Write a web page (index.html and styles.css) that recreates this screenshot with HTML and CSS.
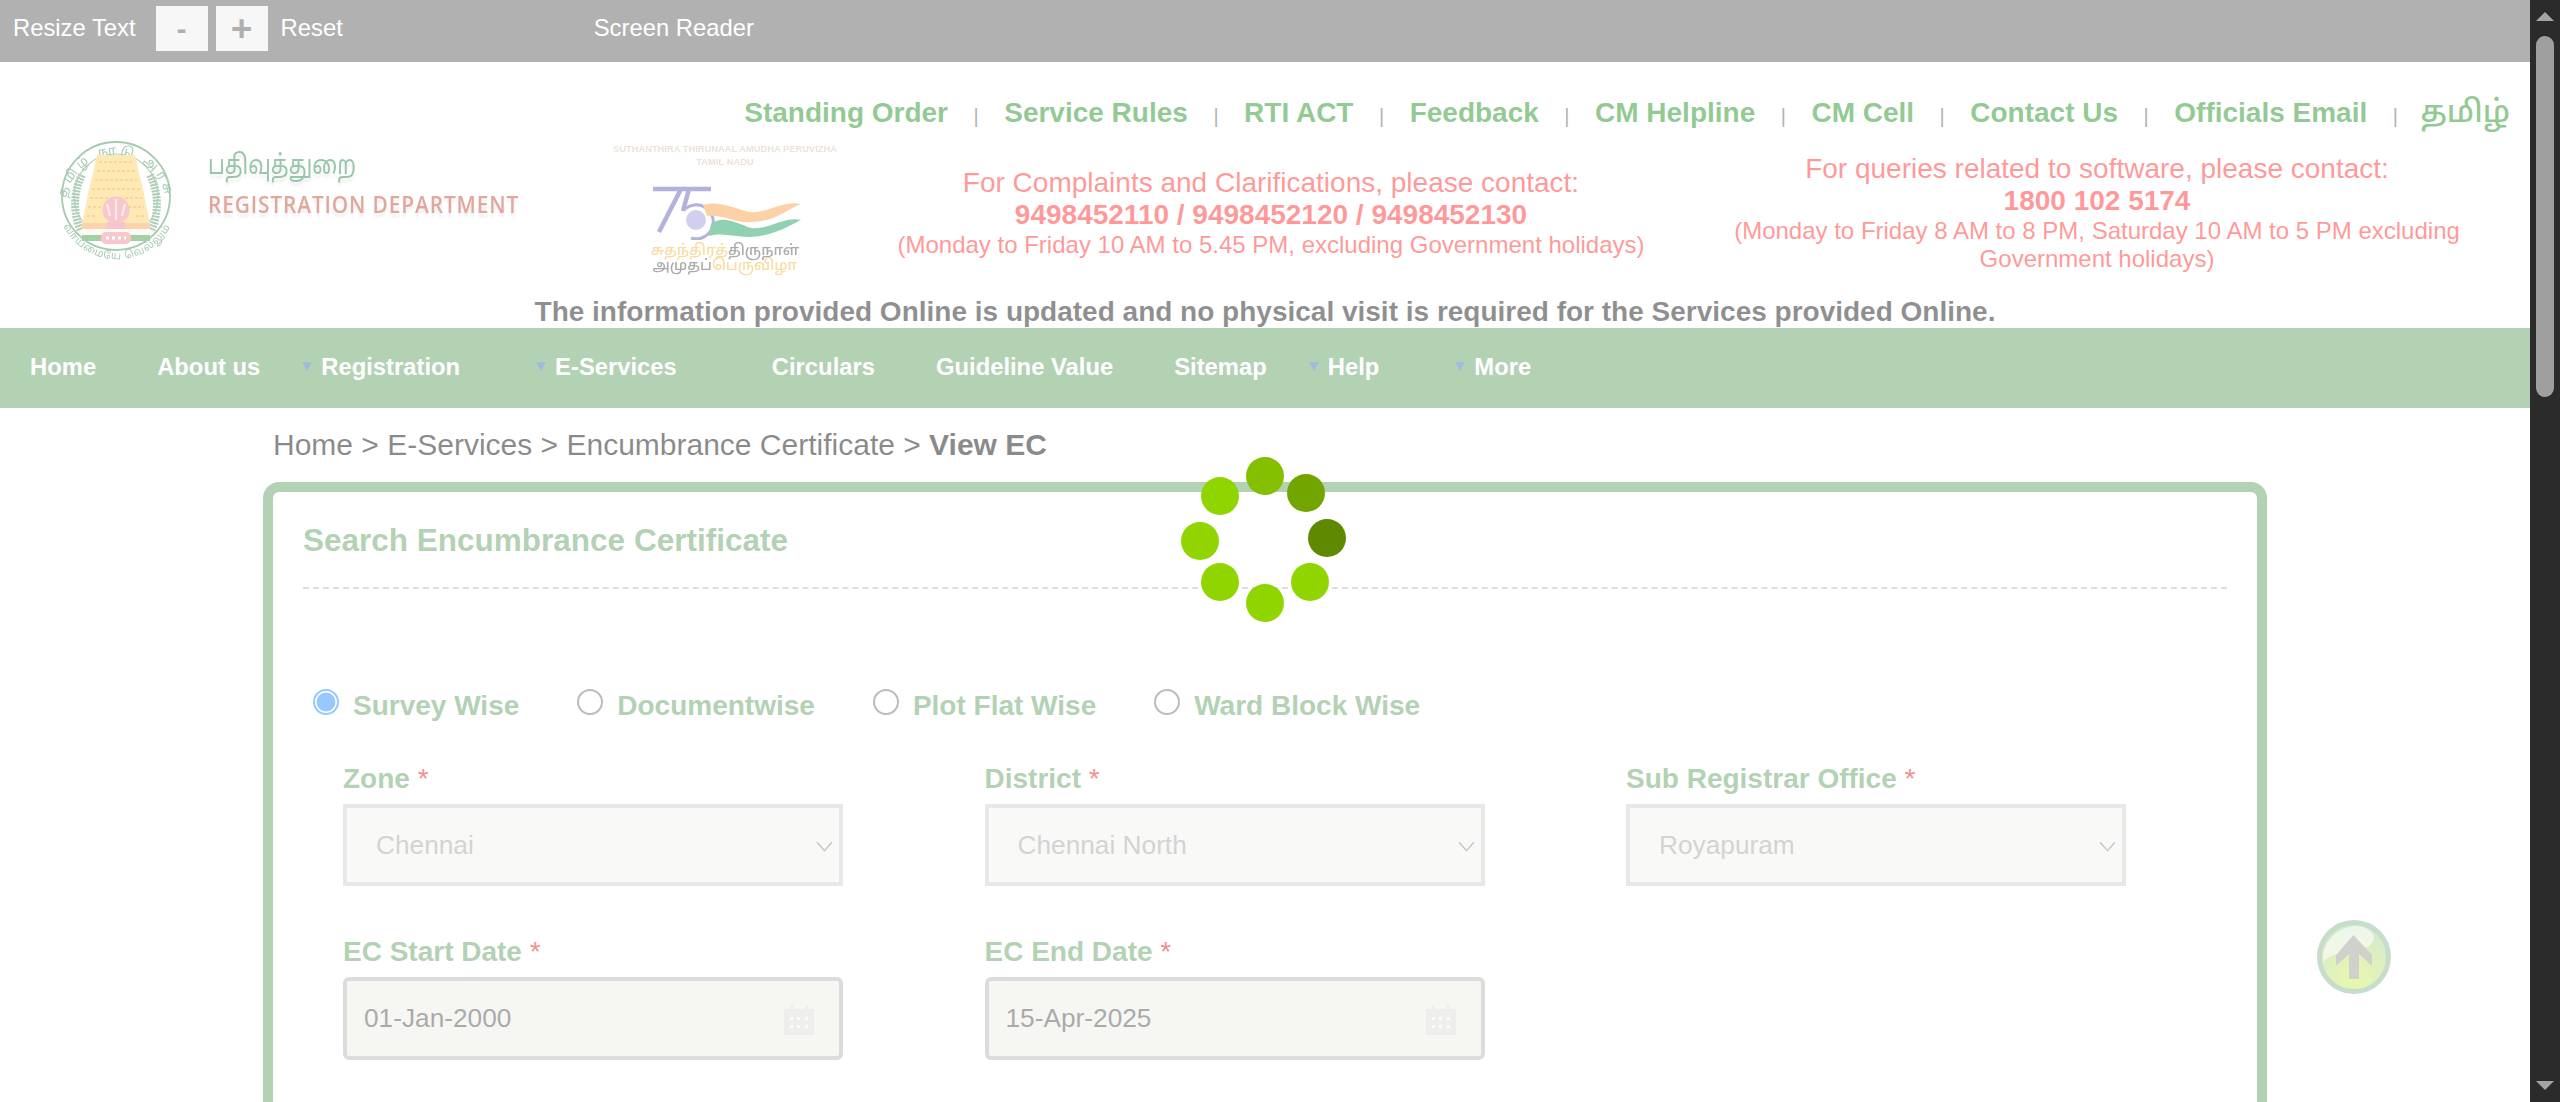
FILE: index.html
```html
<!DOCTYPE html>
<html lang="en">
<head>
<meta charset="utf-8">
<title>View EC - Registration Department</title>
<link rel="stylesheet" href="styles.css">
</head>
<body>
<div class="app">
  <div class="page">
    <div class="topbar">
      <span class="resize-label">Resize Text</span>
      <button class="size-btn minus">-</button>
      <button class="size-btn plus">+</button>
      <span class="reset">Reset</span>
      <span class="reader">Screen Reader</span>
    </div>

    <header class="header">
      <nav class="links">
        <a>Standing Order</a><i>|</i>
        <a>Service Rules</a><i>|</i>
        <a>RTI ACT</a><i>|</i>
        <a>Feedback</a><i>|</i>
        <a>CM Helpline</a><i>|</i>
        <a>CM Cell</a><i>|</i>
        <a>Contact Us</a><i>|</i>
        <a>Officials Email</a><i>|</i>
        <a class="tamil">தமிழ்</a>
      </nav>
      <div class="hdr-row">
        <div class="brand">
          <svg class="emblem" viewBox="0 0 122 128">
            <defs>
              <path id="ring-top" d="M10 66 A 49 49 0 1 1 110 66"/>
              <path id="ring-bottom" d="M6 84 A 60 60 0 0 0 116 84"/>
            </defs>
            <circle cx="60" cy="57" r="54" fill="#fff" stroke="#4c9360" stroke-width="1.8"/>
            <circle cx="60" cy="57" r="42" fill="#fff" stroke="#6ba77a" stroke-width="1.2"/>
            <text class="ring-text"><textPath href="#ring-top" startOffset="50%" text-anchor="middle">தமிழ் நாடு அரசு</textPath></text>
            <path d="M26 36 C16 55 18 78 25 92 M94 36 C104 55 102 78 95 92" fill="none" stroke="#5f9f70" stroke-width="8" stroke-dasharray="2 1.2"/>
            <path d="M41 16 L79 16 L83 34 L87 50 L90 66 L94 84 L26 84 L30 66 L33 50 L37 34 Z" fill="#fcd067"/>
            <path d="M43 23 H77 M41 32 H79 M39 41 H81 M36 50 H84 M34 59 H86 M32 68 H88 M31 77 H40 M80 77 H90" stroke="#f2ab2e" stroke-width="2.2" stroke-dasharray="3 2"/>
            <rect x="26" y="84" width="68" height="6" fill="#f7a85c"/>
            <rect x="26" y="90" width="68" height="6" fill="#fdf7ee"/>
            <rect x="26" y="96" width="68" height="6" fill="#4aa04a"/>
            <circle cx="60" cy="71" r="13.5" fill="#f18f9c"/>
            <path d="M51 65 L54 77 M60 60 V81 M69 65 L66 77" stroke="#fbd3d8" stroke-width="2.2"/>
            <rect x="51" y="83" width="18" height="7" fill="#ee8996"/>
            <rect x="45" y="93" width="30" height="12" rx="5" fill="#f08f9c"/>
            <path d="M50 99 H70" stroke="#fff" stroke-width="3" stroke-dasharray="3 3"/>
            <text class="ring-motto"><textPath href="#ring-bottom" startOffset="50%" text-anchor="middle">வாய்மையே வெல்லும்</textPath></text>
          </svg>
          <div class="dept">
            <div class="dept-ta">பதிவுத்துறை</div>
            <div class="dept-en">REGISTRATION DEPARTMENT</div>
          </div>
        </div>
        <div class="azadi">
          <div class="azadi-cap">SUTHANTHIRA THIRUNAAL AMUDHA PERUVIZHA<br>TAMIL NADU</div>
          <svg class="azadi-mark" viewBox="0 0 152 54">
            <path d="M2 3 H30 L8 46" fill="none" stroke="#6665b8" stroke-width="4.5"/>
            <path d="M31 3 H60 M38 3 L32 25" fill="none" stroke="#6665b8" stroke-width="4.5"/>
            <path d="M33 24 A 17 17 0 1 1 40 52" fill="none" stroke="#6665b8" stroke-width="3"/>
            <circle cx="45" cy="34" r="10" fill="#a09edd"/>
            <path d="M52 19 C66 14 84 22 98 26 C116 28 132 14 150 18 C138 22 124 36 100 36 C86 38 72 28 56 30 Z" fill="#f6a34a"/>
            <path d="M60 38 C72 28 88 38 100 42 C118 44 134 30 150 34 C138 40 122 50 100 51 C86 52 74 46 58 50 Z" fill="#1fa261"/>
          </svg>
          <div class="azadi-ta"><b class="gold">சுதந்திரத்</b><b class="slate">திருநாள்</b><br><b class="slate">அமுதப்</b><b class="gold">பெருவிழா</b></div>
        </div>
        <div class="contact one">
          <p>For Complaints and Clarifications, please contact:</p>
          <strong>9498452110 / 9498452120 / 9498452130</strong>
          <small>(Monday to Friday 10 AM to 5.45 PM, excluding Government holidays)</small>
        </div>
        <div class="contact two">
          <p>For queries related to software, please contact:</p>
          <strong>1800 102 5174</strong>
          <small>(Monday to Friday 8 AM to 8 PM, Saturday 10 AM to 5 PM excluding Government holidays)</small>
        </div>
      </div>
      <p class="notice">The information provided Online is updated and no physical visit is required for the Services provided Online.</p>
    </header>

    <nav class="menu">
      <a>Home</a>
      <a>About us</a>
      <a class="drop">Registration</a>
      <a class="drop">E-Services</a>
      <a>Circulars</a>
      <a>Guideline Value</a>
      <a>Sitemap</a>
      <a class="drop">Help</a>
      <a class="drop">More</a>
    </nav>

    <main class="content">
      <div class="crumbs">Home &gt; E-Services &gt; Encumbrance Certificate &gt; <b>View EC</b></div>
      <section class="card">
        <h2>Search Encumbrance Certificate</h2>
        <div class="radios">
          <label><input type="radio" name="mode" checked>Survey Wise</label>
          <label><input type="radio" name="mode">Documentwise</label>
          <label><input type="radio" name="mode">Plot Flat Wise</label>
          <label><input type="radio" name="mode">Ward Block Wise</label>
        </div>
        <div class="form-grid">
          <div class="field">
            <label>Zone <em>*</em></label>
            <div class="sel-wrap">
              <select disabled><option>Chennai</option></select>
              <svg class="chev" viewBox="0 0 16 10"><path d="M1 1 L8 9 L15 1" fill="none" stroke="currentColor" stroke-width="1.2"/></svg>
            </div>
          </div>
          <div class="field">
            <label>District <em>*</em></label>
            <div class="sel-wrap">
              <select disabled><option>Chennai North</option></select>
              <svg class="chev" viewBox="0 0 16 10"><path d="M1 1 L8 9 L15 1" fill="none" stroke="currentColor" stroke-width="1.2"/></svg>
            </div>
          </div>
          <div class="field">
            <label>Sub Registrar Office <em>*</em></label>
            <div class="sel-wrap">
              <select disabled><option>Royapuram</option></select>
              <svg class="chev" viewBox="0 0 16 10"><path d="M1 1 L8 9 L15 1" fill="none" stroke="currentColor" stroke-width="1.2"/></svg>
            </div>
          </div>
          <div class="field">
            <label>EC Start Date <em>*</em></label>
            <div class="date-wrap">
              <input type="text" value="01-Jan-2000" readonly>
              <svg class="cal" viewBox="0 0 32 32"><path d="M7 2h3v4h12V2h3v4h6v25a1 1 0 0 1-1 1H2a1 1 0 0 1-1-1V6h6z" fill="currentColor"/><path d="M7 14h3v3H7zM14 14h3v3h-3zM22 14h3v3h-3zM7 22h3v3H7zM14 22h3v3h-3zM22 22h3v3h-3z" fill="#f7f7f2"/></svg>
            </div>
          </div>
          <div class="field">
            <label>EC End Date <em>*</em></label>
            <div class="date-wrap">
              <input type="text" value="15-Apr-2025" readonly>
              <svg class="cal" viewBox="0 0 32 32"><path d="M7 2h3v4h12V2h3v4h6v25a1 1 0 0 1-1 1H2a1 1 0 0 1-1-1V6h6z" fill="currentColor"/><path d="M7 14h3v3H7zM14 14h3v3h-3zM22 14h3v3h-3zM7 22h3v3H7zM14 22h3v3h-3zM22 22h3v3h-3z" fill="#f7f7f2"/></svg>
            </div>
          </div>
        </div>
      </section>
    </main>

    <svg class="to-top" viewBox="0 0 74 74">
      <defs>
        <radialGradient id="ball" cx="50%" cy="82%" r="72%">
          <stop offset="0" stop-color="#d2f15a"/>
          <stop offset="0.6" stop-color="#bde07c"/>
          <stop offset="1" stop-color="#a9d39a"/>
        </radialGradient>
      </defs>
      <circle cx="37" cy="37" r="34.5" fill="url(#ball)" stroke="#8fbb98" stroke-width="5"/>
      <path d="M6 36 C8 16 26 6 40 6 C56 8 62 18 52 26 C40 34 20 28 6 42 Z" fill="#fff" opacity=".6"/>
      <path d="M36.5 15 L55 35 V46 L42 34 V59 H32 V34 L19 46 V35 Z" fill="#a1a19b"/>
    </svg>

    <div class="overlay"></div>
    <svg class="spinner" viewBox="0 0 170 170">
      <circle class="d1" cx="85" cy="22" r="19"/>
      <circle class="d2" cx="126" cy="39" r="19"/>
      <circle class="d3" cx="147" cy="84" r="19"/>
      <circle class="d4" cx="130" cy="128" r="19"/>
      <circle class="d4" cx="85" cy="149" r="19"/>
      <circle class="d4" cx="40" cy="128" r="19"/>
      <circle class="d4" cx="20" cy="87" r="19"/>
      <circle class="d4" cx="40" cy="42" r="19"/>
    </svg>
  </div>

  <aside class="scrollbar">
    <span class="arrow up"></span>
    <span class="thumb"></span>
    <span class="arrow down"></span>
  </aside>
</div>
</body>
</html>
```

FILE: styles.css
```css
* { box-sizing: border-box; }
html, body { margin: 0; height: 100%; overflow: hidden; }
body { font-family: "Liberation Sans", Arial, "Noto Sans Tamil", "Lohit Tamil", sans-serif; background: #fff; color: #222; }
p { margin: 0; }

.app { display: flex; height: 100vh; }
.page { position: relative; flex: 1; min-width: 0; overflow: hidden; background: #fff; }

/* top strip */
.topbar { display: flex; align-items: center; height: 62px; background: #636363; color: #fff; font-size: 23.8px; padding: 0 0 5px 13px; }
.topbar span { margin-bottom: 1px; }
.resize-label { margin-right: 20px; }
.size-btn { width: 52px; height: 45px; margin-right: 8px; padding: 0; border: 0; background: #efefef; color: #5e5e5e; font: bold 37px "Liberation Sans", sans-serif; line-height: 45px; }
.minus { font-size: 30px; }
.reset { margin-left: 5px; }
.reader { margin-left: 251px; }

/* header */
.header { display: flex; flex-direction: column; height: 266px; }
.links { display: flex; justify-content: flex-end; align-items: center; gap: 27.1px; height: 32px; margin-top: 35px; padding-right: 20px; color: #279327; font-size: 28px; font-weight: 700; white-space: nowrap; }
.links i { font-style: normal; font-weight: 400; font-size: 20px; color: #666; margin-top: 6px; width: 2px; display: flex; justify-content: center; }
.tamil { font-size: 31px; font-weight: 500; margin-left: -3px; }
.hdr-row { display: flex; align-items: flex-start; flex: 1; min-height: 0; }

.brand { display: flex; width: 590px; padding: 10px 0 0 56px; }
.emblem { width: 122px; height: 128px; flex: none; overflow: visible; filter: blur(.5px); }
.ring-text { font-size: 13px; letter-spacing: 3.4px; fill: #4f9663; }
.ring-motto { font-size: 10.5px; letter-spacing: 1px; fill: #4f9663; }
.dept { margin-left: 30px; padding-top: 8px; }
.dept-ta { font-size: 27px; line-height: 36px; color: #2f8c52; transform: scaleX(.8); transform-origin: left; text-shadow: 0 4px 3px rgba(0,0,0,.14); filter: blur(.4px); white-space: nowrap; }
.dept-en { margin-top: 8px; font-family: "Open Sans", sans-serif; font-size: 24px; font-weight: 600; line-height: 26px; letter-spacing: 1px; color: #c14e35; white-space: nowrap; transform: scaleX(.87); transform-origin: left; text-shadow: 0 4px 3px rgba(0,0,0,.14); filter: blur(.5px); }

.azadi { display: flex; flex-direction: column; align-items: center; width: 270px; padding: 14px 0 0 0; }
.azadi-cap { width: 100%; font-size: 9.35px; line-height: 13px; font-weight: 700; color: #d8c4ad; text-align: center; white-space: nowrap; filter: blur(.5px); }
.azadi-mark { width: 152px; height: 54px; margin-top: 17px; margin-left: 4px; filter: blur(.5px); }
.azadi-ta { margin-top: 2px; font-size: 15px; line-height: 15px; text-align: center; filter: blur(.4px); white-space: nowrap; }
.azadi-ta b { font-weight: 500; }
.gold { color: #f0b840; }
.slate { color: #555; }

.contact { display: flex; flex-direction: column; align-items: center; color: #ff3333; text-align: center; }
.contact p { font-size: 28px; line-height: 32px; white-space: nowrap; }
.contact strong { font-size: 28px; line-height: 32px; }
.contact small { font-size: 24px; line-height: 27.5px; }
.contact.one { width: 800px; margin-left: 11px; padding-top: 38px; }
.contact.two { width: 770px; margin-left: 41px; padding-top: 24px; }

.notice { height: 32px; line-height: 32px; margin-bottom: 0; font-size: 28px; font-weight: 700; color: #1f1f24; text-align: center; }

/* menu */
.menu { display: flex; align-items: center; height: 80px; padding: 0 0 2px 30px; gap: 61px; background: #67a367; color: #fff; font-size: 23.8px; font-weight: 700; white-space: nowrap; }
.menu .drop { position: relative; margin-right: 34px; }
.menu .drop::before { content: ""; position: absolute; left: -19px; top: 9px; border: 5.5px solid transparent; border-top: 9px solid #3f79b8; border-bottom: 0; }

/* content */
.content { padding: 19px 0 0 263px; width: 2004px; box-sizing: content-box; }
.crumbs { padding-left: 10px; font-size: 30px; line-height: 36px; color: #151515; }
.card { width: 2004px; height: 700px; margin-top: 19px; padding: 26px 30px 0 30px; border: 10px solid #67a367; border-bottom: 0; border-radius: 16px 16px 0 0; color: #67a367; }
.card h2 { margin: 0; height: 71px; padding-bottom: 18px; border-bottom: 2px dashed #bcbcbc; font-size: 31.5px; line-height: 44px; font-weight: 700; color: #67a367; }

.radios { display: flex; gap: 58px; margin-top: 99px; padding-left: 10px; font-size: 28px; font-weight: 700; }
.radios label { display: flex; align-items: center; gap: 14px; height: 36px; }
.radios input { appearance: none; width: 26px; height: 26px; margin: -8px 0 0 0; border: 2px solid #777; border-radius: 50%; background: #fff; }
.radios input:checked { border-color: #2f90ff; background: radial-gradient(circle, #2f90ff 0 9px, #fff 9.8px); }

.form-grid { display: grid; grid-template-columns: repeat(3, 500px); column-gap: 141.5px; row-gap: 48px; margin-top: 37px; padding-left: 40px; }
.field label { display: block; height: 43px; font-size: 28px; font-weight: 700; line-height: 36px; }
.field em { font-style: normal; font-weight: 400; color: #e12121; }
.sel-wrap, .date-wrap { position: relative; height: 82px; }
.date-wrap { height: 83px; }
.sel-wrap select { display: block; appearance: none; width: 100%; height: 82px; padding: 0 0 0 29px; border: 4px solid #d1d1d1; border-radius: 0; background: #f3f3ef; color: #a6a6a6; font: 26.25px "Liberation Sans", sans-serif; opacity: 1; }
.chev { position: absolute; right: 10px; top: 37px; width: 17px; height: 11px; color: #8a8a8a; }
.date-wrap input { display: block; width: 100%; height: 83px; padding: 0 0 0 17px; border: 4px solid #b9b9b9; border-radius: 6px; background: #edede7; color: #555; font: 26.25px "Liberation Sans", sans-serif; }
.cal { position: absolute; right: 28px; top: 26px; width: 32px; height: 32px; color: #dcdcd8; }

/* floating */
.to-top { position: absolute; left: 2317px; top: 920px; width: 74px; height: 74px; }
.overlay { position: absolute; inset: 0; background: rgba(255, 255, 255, .5); }
.spinner { position: absolute; left: 1180px; top: 454px; width: 170px; height: 170px; }
.d1 { fill: #84bf00; }
.d2 { fill: #72a500; }
.d3 { fill: #5e8900; }
.d4 { fill: #90d500; }

/* scrollbar */
.scrollbar { position: relative; flex: 0 0 30px; background: #2b2b2b; padding: 36px 6px 0; }
.thumb { display: block; width: 18px; height: 361px; border-radius: 9px; background: #9f9f9f; }
.arrow { position: absolute; left: 6px; width: 0; height: 0; border-left: 9px solid transparent; border-right: 9px solid transparent; }
.up { top: 12px; border-bottom: 9px solid #a5a5a5; }
.down { top: 1081px; border-top: 9px solid #a5a5a5; }
```
